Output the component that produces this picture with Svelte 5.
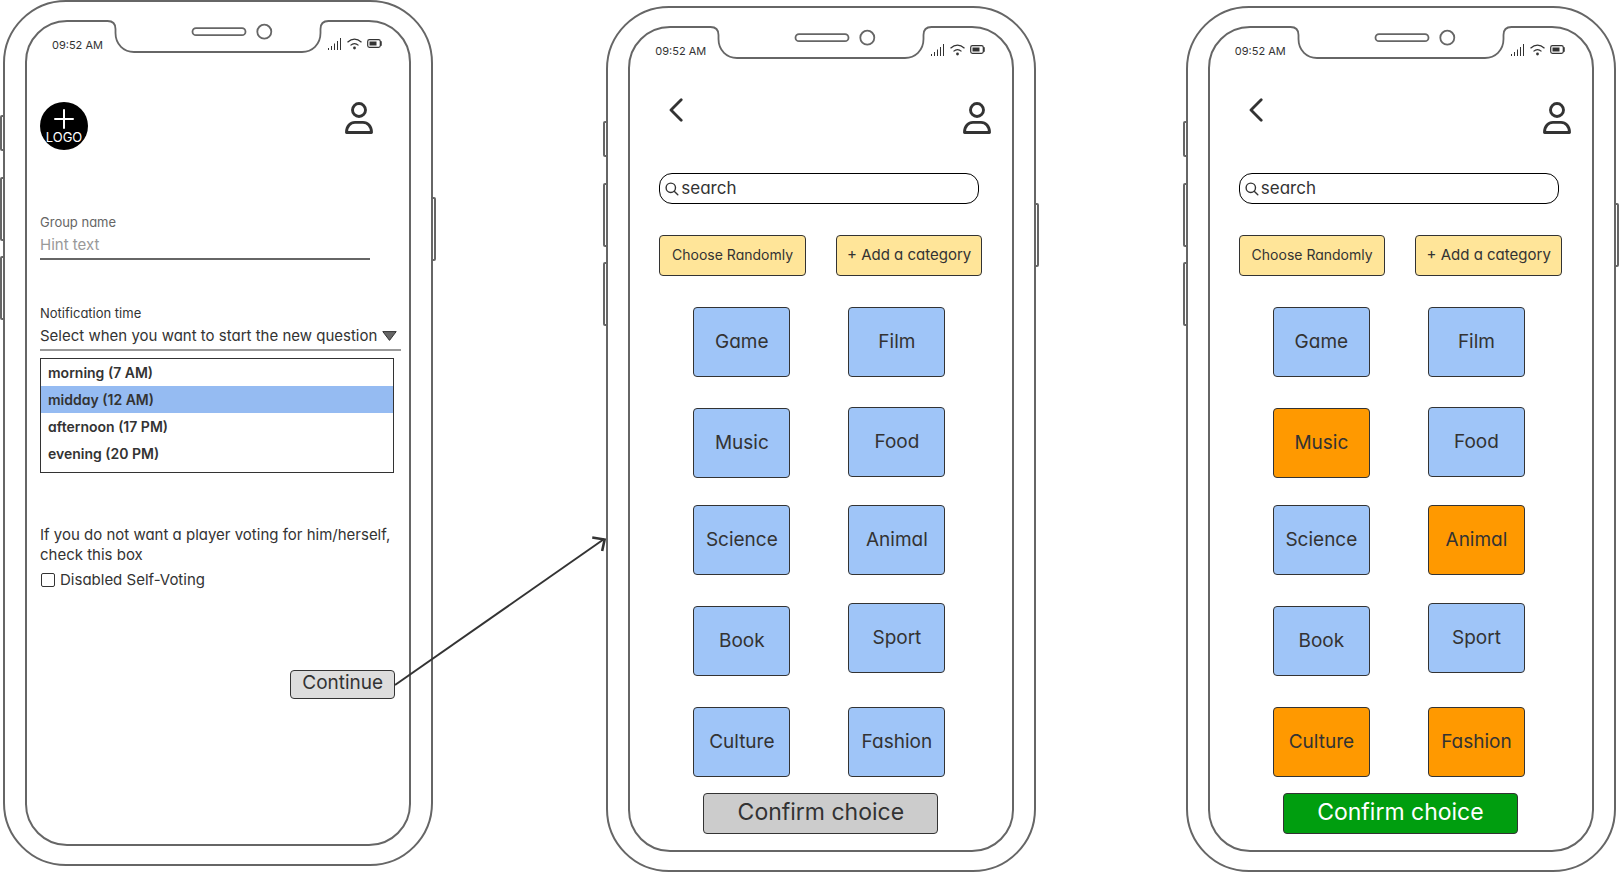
<script>
  let groupName = $state('');
  let selfVotingOff = $state(false);
  let time = $state('midday (12 AM)');
  const times = ['morning (7 AM)', 'midday (12 AM)', 'afternoon (17 PM)', 'evening (20 PM)'];

  const columns = [
    ['Game', 'Music', 'Science', 'Book', 'Culture'],
    ['Film', 'Food', 'Animal', 'Sport', 'Fashion']
  ];

  let pickers = $state([
    { id: 'empty', query: '', chosen: [] },
    { id: 'filled', query: '', chosen: ['Music', 'Animal', 'Culture', 'Fashion'] }
  ]);

  function toggle(picker, name) {
    picker.chosen = picker.chosen.includes(name)
      ? picker.chosen.filter((n) => n !== name)
      : [...picker.chosen, name];
  }
</script>

{#snippet hardware()}
  <span class="key left mute"></span>
  <span class="key left volume-up"></span>
  <span class="key left volume-down"></span>
  <span class="key right power"></span>
{/snippet}

{#snippet notch()}
  <svg class="notch" viewBox="106 18 224 36" aria-hidden="true">
    <path d="M106 19H330V20H328Q320.5 21 320.5 29V34C320.5 45 312 52 302 52H134C124 52 115.5 45 115.5 34V29Q115.5 21 108 20H106Z" fill="#fff" />
    <rect x="108" y="19" width="220" height="4" fill="#fff" />
    <g fill="none" stroke="#666" stroke-width="1.8">
      <path d="M106 21H107.500Q115.500 21 115.500 29V33C115.500 44.500 124 52 134 52H302C312 52 320.500 44.500 320.500 33V29Q320.500 21 328.500 21H330" />
      <rect x="192.500" y="28.200" width="53" height="7" rx="3.500" />
      <circle cx="264.300" cy="31.700" r="7" />
    </g>
  </svg>
{/snippet}

{#snippet status()}
  <div class="status">
    <span>09:52 AM</span>
    <svg width="55" height="14" viewBox="0 0 55 14" aria-hidden="true">
      <g stroke="#333" stroke-width="1">
        <path d="M1.500 13V11M4.500 13V9M7.500 13V6.500M10.500 13V4M13.500 13V1" />
      </g>
      <g fill="none" stroke="#333" stroke-width="1.200">
        <path d="M20.500 5.200Q27.500 -1 34.500 5.200M23.500 8.400Q27.500 4.800 31.500 8.400" />
        <rect x="40.700" y="2.700" width="12.600" height="7.600" rx="1.800" />
      </g>
      <circle cx="27.500" cy="11" r="1.400" fill="#333" />
      <rect x="42.500" y="4.500" width="7" height="4" fill="#333" />
      <path d="M53.500 4.500h1v4h-1z" fill="#333" stroke="#333" stroke-width=".5" />
    </svg>
  </div>
{/snippet}

{#snippet person()}
  <svg width="28" height="32" viewBox="0 0 28 32" aria-hidden="true">
    <g fill="none" stroke="#333" stroke-width="2.900" stroke-linejoin="round">
      <circle cx="14" cy="8" r="6.500" />
      <path d="M1.500 30.500C1.500 24 5.500 20.400 10 20.400H18C22.500 20.400 26.500 24 26.500 30.500Z" />
    </g>
  </svg>
{/snippet}

<main class="board">
  <section class="phone" aria-label="Group settings">
    {@render hardware()}
    <div class="body">
      <form class="screen settings" onsubmit={(e) => e.preventDefault()}>
        {@render notch()}
        {@render status()}
        <header class="top">
          <div class="logo">
            <svg width="20" height="20" viewBox="0 0 20 20" aria-hidden="true">
              <path d="M10 1V19M1 10H19" stroke="#fff" stroke-width="2" stroke-linecap="round" />
            </svg>
            <span>LOGO</span>
          </div>
          <button class="icon" type="button" aria-label="Profile">{@render person()}</button>
        </header>

        <div class="field group">
          <label for="group">Group name</label>
          <input id="group" type="text" placeholder="Hint text" bind:value={groupName} />
        </div>

        <div class="field when">
          <label for="when">Notification time</label>
          <div class="dropdown">
            <select id="when">
              <option>Select when you want to start the new question</option>
            </select>
            <svg width="15" height="10" viewBox="0 0 15 10" aria-hidden="true">
              <path d="M.8.600H14.200L7.500 9.400Z" fill="#666" stroke="#333" />
            </svg>
          </div>
          <ul class="options">
            {#each times as t}
              <li>
                <button type="button" class:current={t === time} aria-pressed={t === time} onclick={() => (time = t)}>{t}</button>
              </li>
            {/each}
          </ul>
        </div>

        <p>If you do not want a player voting for him/herself, check this box</p>
        <label class="check">
          <input type="checkbox" bind:checked={selfVotingOff} />
          Disabled Self-Voting
        </label>
        <button class="continue" type="submit">Continue</button>
      </form>
    </div>
  </section>

  <div class="link">
    <svg viewBox="0 0 214 152" preserveAspectRatio="none" aria-hidden="true">
      <g fill="none" stroke="#333" stroke-width="2">
        <path d="M1 149L212 3" />
        <path d="M200 1.500L212.500 3.500L210 15" stroke-width="2.600" />
      </g>
    </svg>
  </div>

  {#each pickers as picker, i}
    {#if i > 0}<div class="space"></div>{/if}
    <section class="phone lowered" aria-label="Category choice">
      {@render hardware()}
      <div class="body">
        <div class="screen picker">
          {@render notch()}
          {@render status()}
          <header class="top">
            <button class="icon" type="button" aria-label="Back">
              <svg width="14" height="24" viewBox="0 0 14 24" aria-hidden="true">
                <path d="M12.200 1.800L2 12L12.200 22.200" fill="none" stroke="#333" stroke-width="2.800" stroke-linecap="round" stroke-linejoin="round" />
              </svg>
            </button>
            <button class="icon profile" type="button" aria-label="Profile">{@render person()}</button>
          </header>

          <label class="search" for={`search-${picker.id}`}>
            <svg width="14" height="14" viewBox="0 0 14 14" aria-hidden="true">
              <g fill="none" stroke="#333" stroke-width="1.400" stroke-linecap="round">
                <circle cx="5.800" cy="5.800" r="4.700" />
                <path d="M9.200 9.200L12.800 12.800" />
              </g>
            </svg>
            <input id={`search-${picker.id}`} type="text" placeholder="search" aria-label="search" bind:value={picker.query} />
          </label>

          <div class="actions">
            <button type="button" class="random">Choose Randomly</button>
            <button type="button">+ Add a category</button>
          </div>

          <div class="tiles">
            {#each columns as column}
              <div class="column">
                {#each column as name}
                  <button
                    type="button"
                    class:chosen={picker.chosen.includes(name)}
                    aria-pressed={picker.chosen.includes(name)}
                    onclick={() => toggle(picker, name)}>{name}</button>
                {/each}
              </div>
            {/each}
          </div>

          <button type="button" class="confirm" class:ready={picker.chosen.length > 0}>Confirm choice</button>
        </div>
      </div>
    </section>
  {/each}
</main>

<style>
  :global(body) {
    background: #fff;
  }

  .board,
  .board * {
    box-sizing: border-box;
  }

  .board {
    display: flex;
    align-items: flex-start;
    color: #333;
    font-family: Inter, 'Liberation Sans', sans-serif;
    font-feature-settings: 'cv11';
    font-size: 15px;
    line-height: 20px;
  }

  button,
  input,
  select {
    margin: 0;
    padding: 0;
    border: 0;
    color: inherit;
    font: inherit;
    font-feature-settings: inherit;
    background: none;
  }

  button {
    cursor: pointer;
  }

  svg {
    display: block;
  }

  /* Phone shell */
  .phone {
    position: relative;
    flex: 435 1 0;
    min-width: 430px;
    padding: 0 3px;
  }

  .lowered {
    margin-top: 6px;
  }

  .body {
    position: relative;
    padding: 18px 20px;
    border: 2px solid #666;
    border-radius: 63px;
    background: #fff;
  }

  .key {
    position: absolute;
    width: 6px;
    height: 64px;
    border: 2px solid #666;
    border-radius: 2px;
  }

  .left {
    left: 0;
  }

  .right {
    right: 0;
  }

  .mute {
    top: 115px;
    height: 36px;
  }

  .volume-up {
    top: 177px;
  }

  .volume-down {
    top: 256px;
  }

  .power {
    top: 197px;
  }

  .screen {
    position: relative;
    display: flex;
    flex-direction: column;
    border: 2px solid #666;
    border-radius: 42px;
  }

  .notch {
    position: absolute;
    top: -4px;
    left: 50%;
    width: 224px;
    height: 36px;
    margin-left: -112px;
  }

  .status {
    display: flex;
    justify-content: space-between;
    font-size: 11px;
    line-height: 16px;
  }

  .top {
    display: flex;
    justify-content: space-between;
    align-items: flex-start;
  }

  /* Settings screen */
  .settings {
    padding: 15px 8px 145px 13px;
  }

  .settings .status {
    padding: 0 19px 0 12px;
  }

  .settings .top {
    margin-top: 49px;
    padding-right: 28px;
  }

  .logo {
    display: flex;
    flex-direction: column;
    align-items: center;
    width: 48px;
    height: 48px;
    padding-top: 7px;
    border-radius: 50%;
    color: #fff;
    font-size: 13px;
    line-height: 16px;
    background: #000;
  }

  .field {
    display: flex;
    flex-direction: column;
  }

  .field label {
    font-size: 13px;
    line-height: 18px;
  }

  .group {
    margin: 63px 31px 0 0;
  }

  .group label {
    color: #666;
  }

  .group input {
    height: 29px;
    border-bottom: 2px solid #666;
  }

  .group input::placeholder {
    color: #999;
    opacity: 1;
  }

  .when {
    margin-top: 44px;
  }

  .dropdown {
    position: relative;
  }

  .dropdown select {
    display: block;
    width: 100%;
    height: 29px;
    border-bottom: 2px solid #999;
    appearance: none;
  }

  .dropdown svg {
    position: absolute;
    top: 9px;
    right: 4px;
    pointer-events: none;
  }

  .options {
    margin: 7px 7px 0 0;
    padding: 0 0 5px;
    border: 1px solid #333;
    list-style: none;
  }

  .options button {
    display: block;
    width: 100%;
    padding: 0 7px;
    font-size: 14px;
    font-weight: 600;
    line-height: 27px;
    text-align: left;
  }

  .options .current {
    background: #95bbf2;
  }

  p {
    margin: 52px 0 0;
  }

  .check {
    display: flex;
    align-items: center;
    gap: 5px;
    margin-top: 5px;
    padding-left: 1px;
  }

  .check input {
    width: 14px;
    height: 14px;
    border: 1px solid #333;
    border-radius: 2px;
    appearance: none;
  }

  .check input:checked {
    background: #333;
  }

  .continue {
    align-self: flex-end;
    height: 29px;
    margin: 80px 6px 0 0;
    padding: 0 11px 3px;
    border: 1px solid #333;
    border-radius: 4px;
    font-size: 19px;
    background: #ddd;
  }

  /* Connector from the Continue button to the next screen */
  .link {
    position: relative;
    z-index: 1;
    flex: 169 1 0;
    pointer-events: none;
  }

  .link svg {
    position: absolute;
    top: 536px;
    left: -42px;
    width: calc(100% + 45px);
    height: 152px;
  }

  .space {
    flex: 145 1 0;
  }

  /* Category screen */
  .picker {
    padding: 15px 20px 16px 29px;
  }

  .picker .status {
    margin-left: -4px;
    padding-right: 7px;
  }

  .picker .top {
    margin-top: 39px;
    padding: 0 1px 0 10px;
  }

  .profile {
    margin-top: 4px;
  }

  .search {
    display: flex;
    align-items: center;
    gap: 2px;
    height: 31px;
    margin: 39px 13px 0 0;
    padding: 0 5px;
    border: 1px solid #000;
    border-radius: 13px;
  }

  .search input {
    flex: 1;
    min-width: 0;
    padding-bottom: 1px;
    font-size: 17px;
  }

  .search input::placeholder {
    color: #333;
    opacity: 1;
  }

  .actions {
    display: grid;
    grid-template-columns: 1fr 1fr;
    gap: 30px;
    margin: 31px 10px 0 0;
  }

  .actions button {
    height: 41px;
    padding: 0 0 1px;
    border: 1px solid #333;
    border-radius: 4px;
    background: #ffe599;
  }

  .actions .random {
    font-size: 14px;
  }

  .tiles {
    display: grid;
    grid-template-columns: 1fr 1fr;
    gap: 58px;
    margin: 31px 47px 0 34px;
  }

  .column {
    display: grid;
    grid-template-rows: 101px 97px 101px 101px 70px;
  }

  .column + .column {
    grid-template-rows: 100px 98px 98px 104px 70px;
  }

  .column button {
    height: 70px;
    border: 1px solid #333;
    border-radius: 4px;
    font-size: 19px;
    background: #9fc5f8;
  }

  .column .chosen {
    background: #f90;
  }

  .confirm {
    height: 41px;
    margin: 16px 54px 0 44px;
    padding: 0 0 3px;
    border: 1px solid #333;
    border-radius: 4px;
    font-size: 23px;
    background: #ccc;
  }

  .confirm.ready {
    color: #fff;
    background: #009e0f;
  }
</style>
